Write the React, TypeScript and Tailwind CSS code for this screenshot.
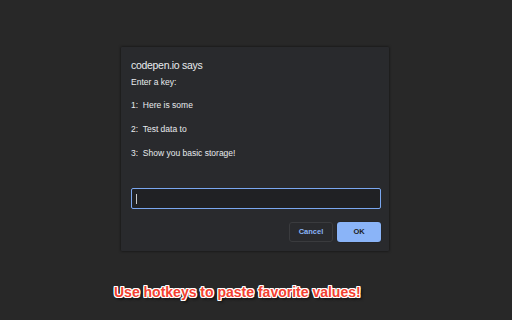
export default function App() {
  const lines = ["1:  Here is some", "2:  Test data to", "3:  Show you basic storage!"];

  return (
    <div className="w-[512px] h-[320px] bg-[#282828] pt-[47px] font-['Liberation_Sans',Arial,sans-serif] overflow-hidden">
      {/* Prompt dialog */}
      <div className="ml-[121px] w-[268px] h-[204px] bg-[#292a2d] pt-[12px] pl-[10px] pr-[8px] shadow-[0_0_3px_rgba(0,0,0,0.7)] rounded-[1px] flex flex-col">
        <div className="text-[10.5px] leading-[13px] tracking-[-0.3px] text-[#e8eaed] whitespace-pre">codepen.io says</div>
        <div className="mt-[5px] text-[8.5px] leading-[11px] text-[#e8eaed] whitespace-pre">Enter a key:</div>
        <div className="mt-[12px] flex flex-col gap-[13px]">
          {lines.map((l) => (
            <div key={l} className="text-[8.5px] leading-[11px] text-[#e8eaed] whitespace-pre">
              {l}
            </div>
          ))}
        </div>

        <div className="mt-[29px] h-[21px] w-[250px] rounded-[2px] border-[1.5px] border-[#7aa7f0] bg-[#202124] flex items-center pl-[4px]">
          <span className="block w-[1px] h-[10px] bg-[#c8c8c8]" />
        </div>

        <div className="mt-[13px] flex justify-end gap-[4px] w-[250px]">
          <button className="w-[44px] h-[20px] rounded-[3px] border border-[#3a3b3e] bg-[#292a2d] text-[7.5px] font-bold text-[#8ab4f8]">
            Cancel
          </button>
          <button className="w-[44px] h-[20px] rounded-[3px] bg-[#8ab4f8] text-[7.5px] font-bold text-[#202124] shadow-[0_0_1px_rgba(0,0,0,0.8)]">
            OK
          </button>
        </div>
      </div>

      {/* Caption */}
      <div className="mt-[33px] pl-[114px] text-[14px] leading-[16px] font-bold text-[#f23f2f] whitespace-pre [text-shadow:1px_0_0_#fff,-1px_0_0_#fff,0_1px_0_#fff,0_-1px_0_#fff,1px_1px_0_#fff,-1px_-1px_0_#fff,1px_-1px_0_#fff,-1px_1px_0_#fff,2px_2px_3px_rgba(0,0,0,0.9)]">
        Use hotkeys to paste favorite values!
      </div>
    </div>
  );
}
